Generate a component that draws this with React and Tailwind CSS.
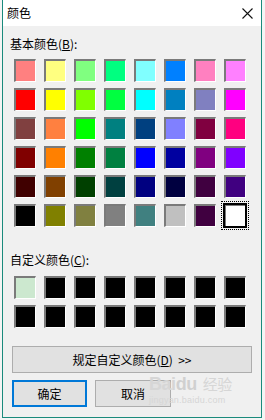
import React from 'react';

const basicColors = [
    ['#ff8080', '#ffff80', '#80ff80', '#00ff80', '#80ffff', '#0080ff', '#ff80c0', '#ff80ff'],
    ['#ff0000', '#ffff00', '#80ff00', '#00ff40', '#00ffff', '#0080c0', '#8080c0', '#ff00ff'],
    ['#804040', '#ff8040', '#00ff00', '#008080', '#004080', '#8080ff', '#800040', '#ff0080'],
    ['#800000', '#ff8000', '#008000', '#008040', '#0000ff', '#0000a0', '#800080', '#8000ff'],
    ['#400000', '#804000', '#004000', '#004040', '#000080', '#000040', '#400040', '#400080'],
    ['#000000', '#808000', '#808040', '#808080', '#408080', '#c0c0c0', '#400040', '#ffffff'],
];

const customColors = [
    '#cce8cf', '#000000', '#000000', '#000000', '#000000', '#000000', '#000000', '#000000',
    '#000000', '#000000', '#000000', '#000000', '#000000', '#000000', '#000000', '#000000',
];

// sunken 3D swatch like the classic win32 colour picker
const Swatch = ({ color, selected }) => (
    <div className="relative w-[22px] h-[23px]">
        <div className="w-full h-full border-t-2 border-l-2 border-t-[#7a7a7a] border-l-[#7a7a7a] border-b border-r border-b-white border-r-white">
            <div className="w-full h-full" style={{ backgroundColor: color }} />
        </div>
        {selected && (
            <>
                <div className="absolute -inset-[1px] border-2 border-black" />
                <div className="absolute -inset-[3px] border border-dotted border-black" />
            </>
        )}
    </div>
);

const App = () => {
    return (
        <div
            className="w-[265px] h-[420px] bg-[#f4f4f4] overflow-hidden text-[12px] text-black"
            style={{ fontFamily: '"Noto Sans CJK SC", "Microsoft YaHei", sans-serif' }}
        >
            <div className="relative ml-[2px] w-[260px] h-[418px] border-x border-b border-[#1a8a7c] bg-[#f0f0f0] flex flex-col">
                {/* Title bar */}
                <div className="h-[26px] bg-white flex items-center justify-between pl-[4px] pr-[8px]">
                    <span className="text-[12px] leading-none">颜色</span>
                    <svg width="11" height="11" viewBox="0 0 11 11">
                        <path d="M0.5 0.5 L10.5 10.5 M10.5 0.5 L0.5 10.5" stroke="#111" strokeWidth="1.1" />
                    </svg>
                </div>

                {/* Basic colours */}
                <div className="pl-[7px] pt-[10px] leading-[16px]">
                    基本颜色(<span className="underline">B</span>):
                </div>
                <div className="pl-[11px] pt-[7px] grid grid-cols-[repeat(8,22px)] gap-x-[8px] gap-y-[6px]">
                    {basicColors.flat().map((c, i) => (
                        <Swatch key={i} color={c} selected={i === 47} />
                    ))}
                </div>

                {/* Custom colours */}
                <div className="pl-[7px] pt-[25px] leading-[16px]">
                    自定义颜色(<span className="underline">C</span>):
                </div>
                <div className="pl-[11px] pt-[8px] grid grid-cols-[repeat(8,22px)] gap-x-[8px] gap-y-[6px]">
                    {customColors.map((c, i) => (
                        <Swatch key={i} color={c} />
                    ))}
                </div>

                {/* Define custom colours */}
                <div className="pl-[9px] pt-[18px]">
                    <button className="w-[240px] h-[27px] bg-[#e1e1e1] border border-[#adadad] flex items-center justify-center text-[12px]">
                        规定自定义颜色(<span className="underline">D</span>)&nbsp;&nbsp;&gt;&gt;
                    </button>
                </div>

                <div className="pl-[9px] pt-[7px] flex gap-[8px]">
                    <button className="w-[75px] h-[27px] bg-[#e1e1e1] border-2 border-[#0078d7] flex items-center justify-center text-[12px]">
                        确定
                    </button>
                    <button className="w-[76px] h-[27px] bg-[#e1e1e1] border border-[#adadad] flex items-center justify-center text-[12px]">
                        取消
                    </button>
                </div>

                {/* faint watermark */}
                <div className="absolute left-[146px] top-[375px] pointer-events-none select-none text-[#d6d6d6] leading-none">
                    <div className="text-[18px] font-bold tracking-tight" style={{ fontFamily: '"Liberation Sans", sans-serif' }}>
                        Bai<span className="text-[#d0d0d0]">du</span>
                        <span className="text-[15px] font-normal ml-[6px]" style={{ fontFamily: '"Noto Sans CJK SC", sans-serif' }}>经验</span>
                    </div>
                    <div className="text-[9px] mt-[3px] tracking-wide" style={{ fontFamily: '"Liberation Sans", sans-serif' }}>
                        jingyan.baidu.com
                    </div>
                </div>
            </div>
        </div>
    );
};

export default App;
